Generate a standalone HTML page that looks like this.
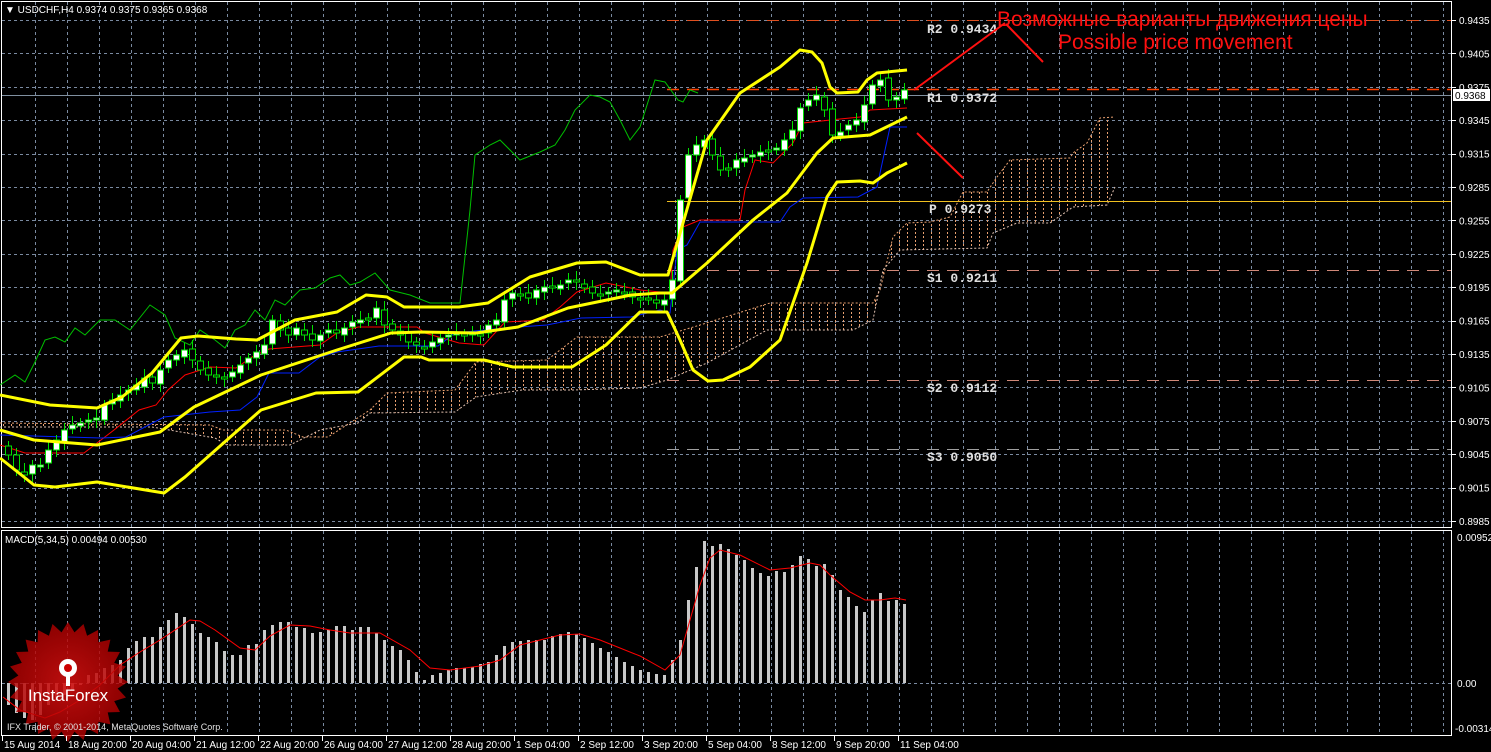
<!DOCTYPE html>
<html><head><meta charset="utf-8"><style>
html,body{margin:0;padding:0;background:#000;}
body{width:1491px;height:752px;overflow:hidden;position:relative;font-family:"Liberation Sans",sans-serif;}
svg{position:absolute;left:0;top:0;}
</style></head><body>
<svg id="s" width="1491" height="752" viewBox="0 0 1491 752" xmlns="http://www.w3.org/2000/svg">
<defs>
<pattern id="hat" width="8" height="4" patternUnits="userSpaceOnUse"><rect x="3" y="0" width="1" height="2" fill="#e8a070"/></pattern>
<radialGradient id="lg" cx="50%" cy="50%" r="50%"><stop offset="0" stop-color="#d01010" stop-opacity="0.9"/><stop offset="1" stop-color="#b00000" stop-opacity="0.8"/></radialGradient>
</defs>
<rect width="1491" height="752" fill="#000"/>
<g id="grid" stroke="#7a8aa0" stroke-width="1" stroke-dasharray="3,3"></g>
<rect x="1.5" y="1.5" width="1450" height="526" fill="none" stroke="#fff" stroke-width="1"/>
<rect x="1.5" y="530.5" width="1450" height="205" fill="none" stroke="#fff" stroke-width="1"/>
<polygon id="cloud" fill="url(#hat)" stroke="none"/>
<polyline id="ca" fill="none" stroke="#e8a070" stroke-width="1" stroke-dasharray="2,2"/>
<polyline id="cb" fill="none" stroke="#e0c0b0" stroke-width="1" stroke-dasharray="2,2"/>
<line x1="667" y1="20.5" x2="1451" y2="20.5" stroke="#e05020" stroke-dasharray="12,8"/>
<line x1="667" y1="89.5" x2="1451" y2="89.5" stroke="#ff4000" stroke-width="1.5" stroke-dasharray="12,8"/>
<line x1="2" y1="95.5" x2="1451" y2="95.5" stroke="#8090a0"/>
<line x1="667" y1="201.5" x2="1451" y2="201.5" stroke="#f0c020"/>
<line x1="667" y1="270.5" x2="1451" y2="270.5" stroke="#d08878" stroke-dasharray="12,8"/>
<line x1="667" y1="380.5" x2="1451" y2="380.5" stroke="#d08878" stroke-dasharray="12,8"/>
<line x1="667" y1="449.5" x2="1451" y2="449.5" stroke="#a0a0a0" stroke-dasharray="12,8"/>
<g font-family="Liberation Mono,monospace" font-size="13" font-weight="bold" fill="#e0e0e0">
<text x="927" y="33">R2 0.9434</text><text x="927" y="102">R1 0.9372</text><text x="929" y="213">P 0.9273</text>
<text x="927" y="282">S1 0.9211</text><text x="927" y="392">S2 0.9112</text><text x="927" y="461">S3 0.9050</text>
</g>
<polyline fill="none" stroke="#00c000" stroke-width="1" points="0,385 15,375 25,382 35,362 45,340 55,337 65,342 75,328 85,335 100,320 115,320 130,330 150,305 165,315 175,338 190,345 200,330 215,340 225,348 235,330 245,325 255,310 265,320 275,300 285,305 300,290 315,288 330,278 340,275 350,285 360,282 375,273 390,290 410,295 430,303 460,303 470,210 475,155 490,145 500,140 510,150 520,160 540,152 555,145 565,130 575,110 590,95 600,97 610,102 620,120 630,140 640,127 655,80 665,82 678,100 683,102 690,90 698,93"/>
<polyline fill="none" stroke="#ff0000" stroke-width="1" points="0,445 25,453 84,453 114,430 139,410 156,405 168,390 185,375 210,367 236,368 252,357 269,349 320,345 337,333 358,327 417,327 425,333 459,343 484,345 505,322 543,320 560,307 577,292 606,283 631,288 640,290 670,293 673,250 683,227 700,220 740,220 745,190 755,160 773,163 793,143 803,123 840,119 860,117 870,110 907,108"/>
<polyline fill="none" stroke="#0020ff" stroke-width="1" points="0,435 101,438 126,437 164,417 210,412 240,410 257,397 269,373 299,373 320,357 337,352 379,346 438,346 455,333 505,328 547,325 581,318 631,317 660,310 670,313 677,250 687,245 700,222 780,222 790,207 803,198 858,197 877,187 890,127 907,127"/>
<g id="candles"></g>
<g fill="none" stroke="#ffff00" stroke-width="3" stroke-linejoin="round">
<polyline points="0,395 50,405 97,408 122,397 152,373 181,338 198,336 236,339 257,340 295,320 337,312 366,295 387,297 404,307 459,307 488,303 530,277 577,263 606,262 640,275 668,275 707,140 740,93 780,67 800,50 812,52 822,63 830,87 837,93 858,92 867,80 877,73 907,70"/>
<polyline points="0,430 34,440 97,445 160,432 194,407 261,375 337,350 391,333 421,332 476,333 518,327 568,308 631,295 660,293 672,293 707,263 753,220 787,193 817,153 833,138 870,135 907,117"/>
<polyline points="0,458 34,485 55,487 97,482 164,493 185,477 261,410 316,393 358,392 404,357 421,357 429,360 484,360 513,367 572,367 606,345 640,312 667,312 680,340 693,370 708,381 723,380 750,367 780,340 807,263 827,197 837,182 860,181 873,183 887,173 907,163"/>
</g>
<g stroke="#ff1010" stroke-width="2"><line x1="914" y1="90" x2="1005" y2="23"/><line x1="1006" y1="24" x2="1043" y2="62"/><line x1="917" y1="133" x2="963" y2="178"/></g>
<text x="997" y="26" font-size="21" fill="#ff1010" font-family="Liberation Sans,sans-serif">Возможные варианты движения цены</text>
<text x="1058" y="49" font-size="21" fill="#ff1010" font-family="Liberation Sans,sans-serif">Possible price movement</text>
<line x1="2" y1="683.5" x2="1451" y2="683.5" stroke="#7a8aa0" stroke-dasharray="3,3"/>
<g id="macd" fill="#c8c8c8"></g>
<polyline fill="none" stroke="#ff0000" stroke-width="1" points="3,697 20,710 45,718 60,712 80,700 100,685 120,665 140,652 160,640 190,620 200,621 215,630 240,648 255,650 270,636 290,625 310,626 330,630 350,633 380,633 410,650 430,668 450,670 480,666 500,660 520,645 560,635 580,634 600,640 640,656 665,670 680,655 690,620 700,585 710,558 720,550 740,555 770,570 790,568 810,563 820,565 830,575 850,592 865,600 880,600 895,598 906,600"/>
<g transform="translate(68,682)">
<polygon id="star" fill="url(#lg)"/>
<g fill="#fff"><circle cx="0" cy="-14" r="9"/><circle cx="0" cy="-14" r="4" fill="#c00"/><rect x="-2" y="-10" width="4" height="14"/></g>
<text x="0" y="19" text-anchor="middle" font-size="17" fill="#fff">InstaForex</text>
</g>
<text x="7" y="730" font-size="9" fill="#e0e0e0">IFX Trader, © 2001-2014, MetaQuotes Software Corp.</text>
<text x="5" y="13" font-size="10" fill="#fff">▼ USDCHF,H4  0.9374 0.9375 0.9365 0.9368</text>
<text x="5" y="543" font-size="10" fill="#fff">MACD(5,34,5) 0.00494 0.00530</text>
<g id="axis" font-size="10" fill="#fff"></g>
<rect x="1453" y="89" width="37" height="12" fill="#fff"/>
<text x="1455" y="99" font-size="10" fill="#000">0.9368</text>
<text x="1457" y="541" font-size="10" fill="#fff">0.00952</text>
<text x="1457" y="687" font-size="10" fill="#fff">0.00</text>
<text x="1455" y="732" font-size="10" fill="#fff">-0.00314</text>
<g id="time" font-size="10" fill="#fff"></g>
</svg>
<script>
(function(){
var NS="http://www.w3.org/2000/svg";
function el(p,t,a){var e=document.createElementNS(NS,t);for(var k in a)e.setAttribute(k,a[k]);p.appendChild(e);return e;}
var g=document.getElementById('grid');
for(var x=35.5;x<1450;x+=32){el(g,'line',{x1:x,y1:2,x2:x,y2:527});el(g,'line',{x1:x,y1:531,x2:x,y2:735});}
var ax=document.getElementById('axis');
for(var k=0;k<16;k++){var y=20+k*33.4;var yy=Math.round(y)+0.5;el(g,'line',{x1:2,y1:yy,x2:1451,y2:yy});
el(ax,'line',{x1:1452,y1:yy,x2:1456,y2:yy,stroke:'#fff'});
var t=el(ax,'text',{x:1459,y:y+4});t.textContent=(0.9435-k*0.003).toFixed(4);}
var A=[[0,423],[210,425],[223,430],[286,430],[303,437],[328,437],[370,410],[387,393],[455,390],[476,362],[547,360],[577,337],[660,337],[700,325],[770,303],[873,303],[880,290],[893,237],[907,223],[930,222],[950,217],[963,192],[987,192],[997,177],[1010,160],[1070,158],[1073,153],[1087,143],[1100,118],[1115,117]];
var B=[[0,427],[152,427],[215,438],[227,445],[290,445],[320,430],[358,423],[370,413],[455,412],[476,397],[522,390],[572,390],[640,388],[667,380],[707,363],[767,330],[853,330],[873,320],[883,270],[900,250],[987,248],[993,233],[1017,223],[1050,223],[1073,207],[1107,205],[1115,187]];
function s(a){return a.map(function(p){return p.join(',')}).join(' ');}
document.getElementById('ca').setAttribute('points',s(A));
document.getElementById('cb').setAttribute('points',s(B));
document.getElementById('cloud').setAttribute('points',s(A)+' '+s(B.slice().reverse()));
var C=[455,470,475,465,465,450,440,430,425,423,420,418,405,400,395,390,385,378,383,370,360,355,350,360,370,375,375,378,372,365,358,352,345,320,330,335,328,335,340,335,330,333,328,322,320,318,308,325,330,335,342,345,348,342,338,335,332,335,333,335,325,320,300,293,295,298,290,287,288,285,280,282,288,293,295,292,290,293,297,300,300,303,300,280,200,155,145,140,155,170,168,160,158,155,152,150,148,140,130,108,100,95,110,135,132,125,120,105,85,80,100,97,90];
var cg=document.getElementById('candles');var prev=448;
for(var i=0;i<C.length;i++){var cx=8+i*8,c=C[i],o=prev+((i*7)%5-2);var bt=Math.min(o,c),bb=Math.max(o,c);if(bb-bt<2)bb=bt+2;
el(cg,'line',{x1:cx+0.5,y1:bt-5-(i%3)*2,x2:cx+0.5,y2:bb+5+(i%4),stroke:'#00e000'});
el(cg,'rect',{x:cx-2.5,y:bt,width:6,height:bb-bt,fill:(c<o?'#fff':'#000'),stroke:'#00e000','stroke-width':1});prev=c;}
var M=[705,713,718,720,715,705,700,695,690,685,675,673,668,665,660,648,641,637,637,627,620,613,617,624,633,637,642,651,655,655,645,644,630,625,622,622,627,628,633,632,630,626,626,630,627,627,633,640,646,650,660,672,680,675,673,670,668,668,667,664,662,655,646,642,641,640,640,640,636,634,632,634,638,643,648,652,657,662,666,670,672,674,675,660,640,600,567,541,546,544,549,555,560,568,573,576,571,572,565,556,559,566,564,575,590,597,606,612,600,593,601,600,604];
var mg=document.getElementById('macd');
for(var i=0;i<M.length;i++){var mx=7+i*8,my=M[i];var mt=Math.min(my,683),mh=Math.abs(683-my);el(mg,'rect',{x:mx,y:mt,width:3,height:Math.max(mh,1)});}
var pts=[];for(var i=0;i<48;i++){var r=i%2?50:60;var a=i*Math.PI/24;pts.push((r*Math.cos(a)).toFixed(1)+','+(r*Math.sin(a)).toFixed(1));}
document.getElementById('star').setAttribute('points',pts.join(' '));
var T=["15 Aug 2014","18 Aug 20:00","20 Aug 04:00","21 Aug 12:00","22 Aug 20:00","26 Aug 04:00","27 Aug 12:00","28 Aug 20:00","1 Sep 04:00","2 Sep 12:00","3 Sep 20:00","5 Sep 04:00","8 Sep 12:00","9 Sep 20:00","11 Sep 04:00"];
var tg=document.getElementById('time');
for(var i=0;i<T.length;i++){var tx=2+i*64;el(tg,'line',{x1:tx+0.5,y1:736,x2:tx+0.5,y2:741,stroke:'#fff'});var tt=el(tg,'text',{x:tx+2,y:748});tt.textContent=T[i];}
})();
</script>
</body></html>
